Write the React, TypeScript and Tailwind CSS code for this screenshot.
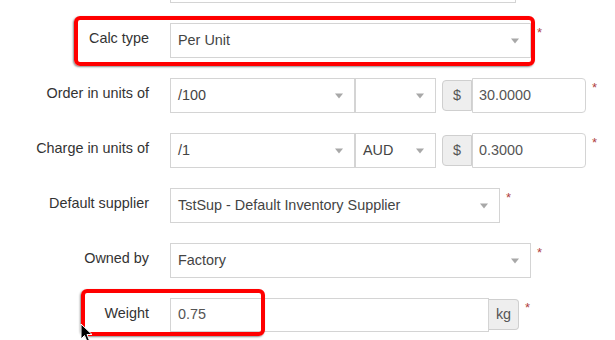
import React from "react";

type SelectProps = {
  value: string;
  width: string;
};

function Caret() {
  return (
    <span className="absolute right-[11px] top-1/2 -translate-y-1/2 w-0 h-0 border-l-[4px] border-r-[4px] border-t-[5px] border-l-transparent border-r-transparent border-t-[#a8a8a8]" />
  );
}

function Select({ value, width }: SelectProps) {
  return (
    <div
      className={`relative h-[35px] ${width} shrink-0 border border-[#d4d4d4] bg-white flex items-center pl-[7px] text-[14.4px] text-[#444]`}
    >
      {value}
      <Caret />
    </div>
  );
}

function Star() {
  return (
    <span className="self-start mt-[3px] ml-[6px] text-[13px] leading-none text-[#b0413e]">*</span>
  );
}

function Row({ label, children }: { label: string; children: React.ReactNode }) {
  return (
    <div className="relative flex h-[35px]">
      <div className="w-[149px] shrink-0 text-right text-[14.4px] leading-[20px] pt-[5px] text-[#333]">
        {label}
      </div>
      <div className="ml-[21px] flex items-start">{children}</div>
    </div>
  );
}

function Money({ value }: { value: string }) {
  return (
    <div className="ml-[6px] flex items-center h-[35px]">
      <div className="h-[31px] w-[30px] flex items-center justify-center bg-[#eeeeee] border border-[#cfcfcf] rounded-l-[4px] text-[14.4px] text-[#555]">
        $
      </div>
      <div className="h-[35px] w-[114px] border border-[#d4d4d4] rounded-r-[4px] bg-white flex items-center pl-[6px] text-[14.4px] text-[#555]">
        {value}
      </div>
    </div>
  );
}

export default function App() {
  return (
    <div
      className="relative w-[615px] h-[340px] overflow-hidden bg-white"
      style={{ fontFamily: '"Liberation Sans", Arial, sans-serif' }}
    >
      <div className="flex flex-col gap-[20px]">
        <div className="ml-[170px] mt-[-31px] h-[34px] w-[346px] border border-[#d4d4d4]" />

        <Row label="Calc type">
          <Select value="Per Unit" width="w-[361px]" />
          <Star />
          <div className="absolute left-[74px] top-[-7px] w-[461px] h-[50px] border-[4px] border-[#ff0000] rounded-[6px] shadow-[-1px_1px_2px_rgba(0,0,0,0.45)] pointer-events-none" />
        </Row>

        <Row label="Order in units of">
          <Select value="/100" width="w-[185px]" />
          <Select value="" width="w-[81px]" />
          <Money value="30.0000" />
          <Star />
        </Row>

        <Row label="Charge in units of">
          <Select value="/1" width="w-[185px]" />
          <Select value="AUD" width="w-[81px]" />
          <Money value="0.3000" />
          <Star />
        </Row>

        <Row label="Default supplier">
          <Select value="TstSup - Default Inventory Supplier" width="w-[330px]" />
          <Star />
        </Row>

        <Row label="Owned by">
          <Select value="Factory" width="w-[361px]" />
          <Star />
        </Row>

        <Row label="Weight">
          <div className="h-[34px] w-[319px] border border-[#d4d4d4] bg-white flex items-center pl-[7px] text-[14.4px] text-[#555]">
            0.75
          </div>
          <div className="mt-[1px] h-[31px] w-[30px] flex items-center justify-center bg-[#eeeeee] border border-[#cfcfcf] border-l-0 rounded-r-[4px] text-[14.4px] text-[#555]">
            kg
          </div>
          <Star />
          <div className="absolute left-[81px] top-[-9px] w-[184px] h-[47px] border-[4px] border-[#ff0000] rounded-[6px] shadow-[-1px_1px_2px_rgba(0,0,0,0.45)] pointer-events-none" />
        </Row>
      </div>

      <svg className="absolute left-[80px] top-[323px]" width="14" height="20" viewBox="0 0 14 20">
        <path d="M1 1 L1 16 L4.5 12.5 L7 18.5 L9.5 17.5 L7 11.5 L12 11.5 Z" fill="#000" stroke="#fff" strokeWidth="1" />
      </svg>
    </div>
  );
}
